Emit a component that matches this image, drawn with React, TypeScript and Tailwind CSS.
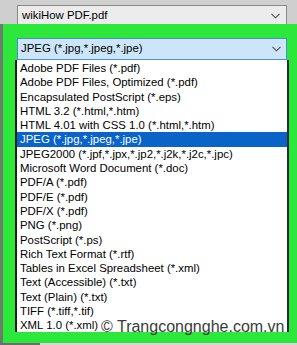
import React from 'react';

const formats = [
  'Adobe PDF Files (*.pdf)',
  'Adobe PDF Files, Optimized (*.pdf)',
  'Encapsulated PostScript (*.eps)',
  'HTML 3.2 (*.html,*.htm)',
  'HTML 4.01 with CSS 1.0 (*.html,*.htm)',
  'JPEG (*.jpg,*.jpeg,*.jpe)',
  'JPEG2000 (*.jpf,*.jpx,*.jp2,*.j2k,*.j2c,*.jpc)',
  'Microsoft Word Document (*.doc)',
  'PDF/A (*.pdf)',
  'PDF/E (*.pdf)',
  'PDF/X (*.pdf)',
  'PNG (*.png)',
  'PostScript (*.ps)',
  'Rich Text Format (*.rtf)',
  'Tables in Excel Spreadsheet (*.xml)',
  'Text (Accessible) (*.txt)',
  'Text (Plain) (*.txt)',
  'TIFF (*.tiff,*.tif)',
  'XML 1.0 (*.xml)',
];

const Chevron = () => (
  <svg width="9" height="6" viewBox="0 0 9 6" className="shrink-0">
    <polyline points="0.5,0.8 4.5,4.8 8.5,0.8" fill="none" stroke="#4a4a4a" strokeWidth="1.1" />
  </svg>
);

export default function App() {
  const selected = 'JPEG (*.jpg,*.jpeg,*.jpe)';

  return (
    <div className="w-[297px] h-[345px] overflow-hidden bg-[#cfcfcf] flex flex-col relative font-['Liberation_Sans',Arial,sans-serif] text-[11.4px] text-black">
      {/* save-as file name combobox, partly covered by the highlight frame */}
      <div className="h-[24px] pt-[5px] pl-[17px] shrink-0">
        <div className="w-[270px] h-[19px] bg-[#ececec] border border-b-0 border-[#8a8a8a] flex items-center justify-between pl-[4px] pr-[6px] pt-[2px]">
          <span>wikiHow PDF.pdf</span>
          <Chevron />
        </div>
      </div>

      <div className="flex h-[319px] shrink-0">
        <div className="w-[3px] bg-[#6b7d6b]" />
        {/* green highlight frame */}
        <div className="flex-1 bg-[#2be83a] pt-[14px] pl-[12px] pr-[8px]">
          <div className="w-[274px]">
            <div className="mx-[2px] h-[22px] bg-[#cde5f8] border border-[#4a8fd0] flex items-center justify-between pl-[3px] pr-[5px]">
              <span>{selected}</span>
              <Chevron />
            </div>
            <div className="bg-white border-l-2 border-l-[#1c1c1c] border-r-2 border-r-[#1f2a3a] h-[272px] pt-[1px]">
              {formats.map((f) => (
                <div
                  key={f}
                  className={`h-[14.3px] leading-[14.3px] pl-[3px] whitespace-nowrap overflow-hidden ${
                    f === selected ? 'bg-[#0a63c9] text-white' : ''
                  }`}
                >
                  {f}
                </div>
              ))}
            </div>
          </div>
        </div>
      </div>

      <div className="flex flex-1">
        <div className="w-[40px] bg-[#6d6d6d]" />
        <div className="flex-1 bg-[#d6d6d6]" />
      </div>

      {/* watermark */}
      <div className="absolute left-[101px] top-[317px] text-[16px] leading-[20px] text-[#3a3a3a] whitespace-nowrap">
        © Trangcongnghe.com.vn
      </div>
    </div>
  );
}
